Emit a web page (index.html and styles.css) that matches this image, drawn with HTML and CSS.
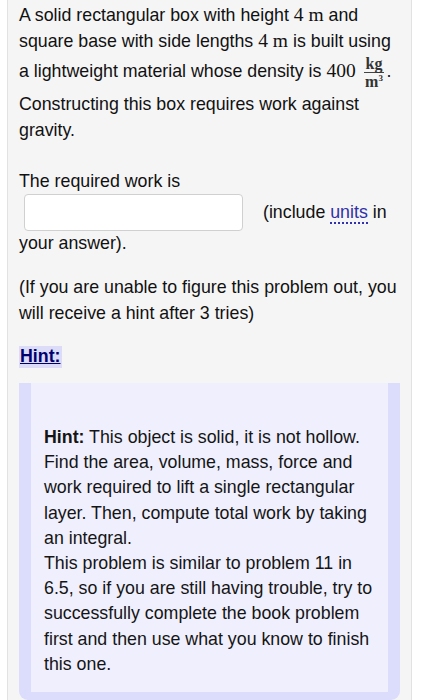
FILE: index.html
```html
<!DOCTYPE html>
<html>
<head>
<meta charset="utf-8">
<link rel="stylesheet" href="styles.css">
</head>
<body>
<div class="problem">
  <p class="intro">A solid rectangular box with height <span class="math">4&nbsp;m</span> and square base with side lengths <span class="math">4&nbsp;m</span> is built using a lightweight material whose density is <span class="math">400</span>&nbsp;<span class="frac"><span class="num">kg</span><span class="den">m<sup>3</sup></span></span>. Constructing this box requires work against gravity.</p>

  <div class="answer">
    <div>The required work is</div>
    <div class="answer-row">
      <span class="input"></span>
      <span class="include">(include <span class="units">units</span> in</span>
    </div>
    <div>your answer).</div>
  </div>

  <p class="note">(If you are unable to figure this problem out, you will receive a hint after 3 tries)</p>

  <p class="hint-link-row"><span class="hint-link">Hint:</span></p>

  <div class="hint-box">
    <div class="hint-inner">
      <p class="hint-text"><b>Hint:</b> This object is solid, it is not hollow. Find the area, volume, mass, force and work required to lift a single rectangular layer. Then, compute total work by taking an integral.<br>This problem is similar to problem 11 in 6.5, so if you are still having trouble, try to successfully complete the book problem first and then use what you know to finish this one.</p>
    </div>
  </div>
</div>
</body>
</html>
```
FILE: styles.css
```css
html, body {
  margin: 0;
  padding: 0;
  background: #ffffff;
}
body {
  font-family: "Liberation Sans", Arial, sans-serif;
  font-size: 17.8px;
  color: #111;
  line-height: 25.4px;
  overflow: hidden;
}
.problem {
  margin: 0 13px 0 7px;
  background: #f5f5f5;
  border: 1px solid #e2e2e2;
  border-top: none;
  padding: 2px 11px 20px 11px;
  height: 720px;
}
p { margin: 0; }
.intro { margin-bottom: 26px; line-height: 26px; }
.math {
  font-family: "Liberation Serif", "Times New Roman", serif;
  font-size: 19.5px;
}
.frac {
  display: inline-flex;
  flex-direction: column;
  align-items: center;
  vertical-align: 7.5px;
  font-family: "Liberation Serif", "Times New Roman", serif;
  font-size: 16px;
  line-height: 15px;
  font-weight: bold;
  color: #333;
  margin-left: 3px;
  margin-right: 2px;
}
.frac .num {
  border-bottom: 1px solid #444;
  padding: 2px 2px 1px;
}
.frac .den { padding: 1px 0 2px; }
.frac sup { font-size: 9px; line-height: 0; vertical-align: 6px; }
.answer-row {
  display: flex;
  align-items: center;
  height: 37px;
  margin: 0 0 0 5px;
}
.input {
  display: block;
  box-sizing: border-box;
  width: 219px;
  height: 37px;
  background: #fff;
  border: 1px solid #d0d0d0;
  border-radius: 4px;
  margin-right: 20px;
}
.units {
  color: #3030a8;
  border-bottom: 2px dotted #3030b0;
  line-height: 19px;
  display: inline-block;
}
.answer { margin-bottom: 18.5px; }
.note { margin-bottom: 17.5px; }
.hint-link-row { margin-bottom: 14px; }
.hint-link {
  color: #00006e;
  font-weight: bold;
  text-decoration: underline;
  background: #dcdcf8;
  padding: 0 1px 2px;
}
.hint-box {
  background: #dcdcfc;
  padding: 0 12px 8px 12px;
  border-radius: 0 0 9px 9px;
}
.hint-inner {
  background: #efeffd;
  padding: 42px 13px 15px 13px;
}
.hint-text { color: #151515; line-height: 25.2px; }
```
